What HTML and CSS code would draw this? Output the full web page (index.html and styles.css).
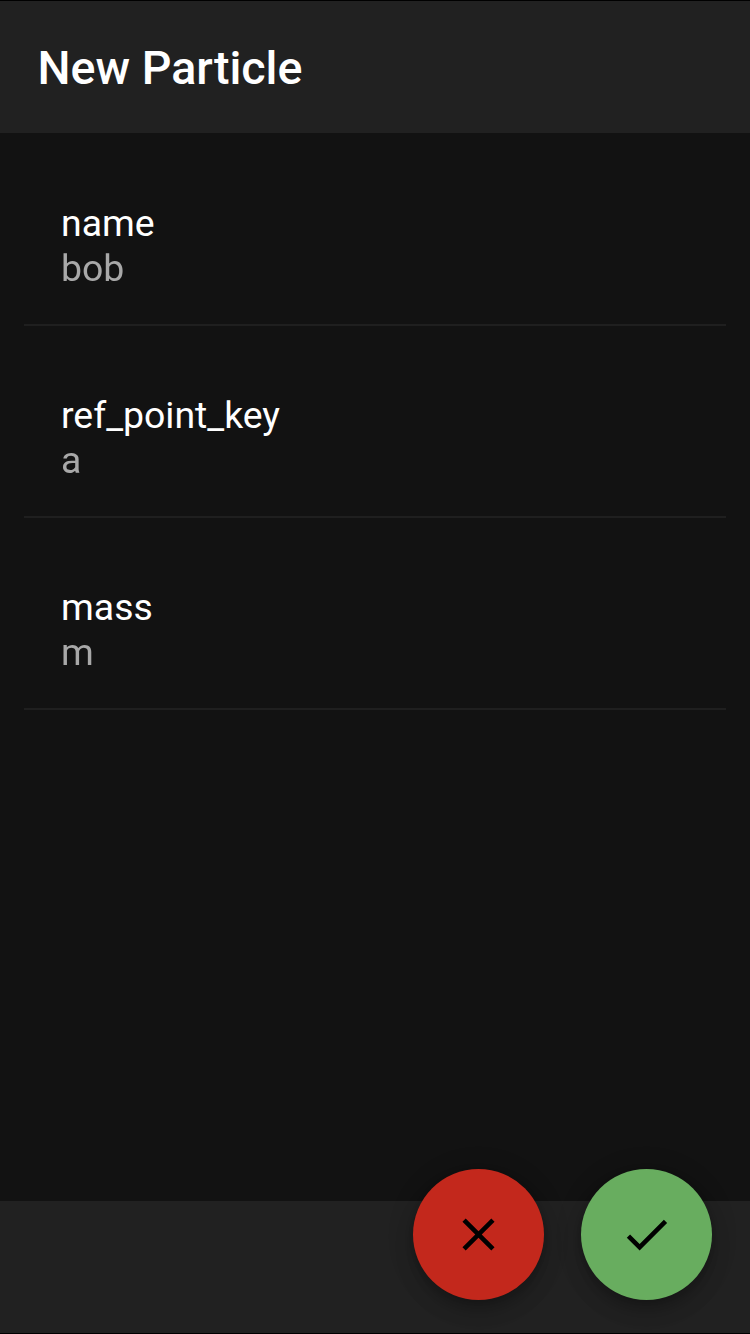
FILE: index.html
```html
<!DOCTYPE html>
<html>
<head>
<meta charset="utf-8">
<title>New Particle</title>
<link rel="stylesheet" href="styles.css">
</head>
<body>
<div class="appbar">New Particle</div>

<div class="fields">
  <div class="field">
    <div class="field-label">name</div>
    <div class="field-value">bob</div>
  </div>
  <div class="field">
    <div class="field-label">ref_point_key</div>
    <div class="field-value">a</div>
  </div>
  <div class="field">
    <div class="field-label">mass</div>
    <div class="field-value">m</div>
  </div>
</div>

<div class="bottombar">
  <div class="fabs">
    <div class="fab fab-cancel">
      <svg width="55" height="55" viewBox="0 0 24 24"><path d="M19 6.41 17.59 5 12 10.59 6.41 5 5 6.41 10.59 12 5 17.59 6.41 19 12 13.41 17.59 19 19 17.59 13.41 12z"/></svg>
    </div>
    <div class="fab fab-ok">
      <svg width="55" height="55" viewBox="0 0 24 24"><path d="M9 16.17 4.83 12l-1.42 1.41L9 19 21 7l-1.41-1.41z"/></svg>
    </div>
  </div>
</div>
</body>
</html>
```

FILE: styles.css
```css
/* New Particle form */

html, body
{ height: 100%;
}

body
{ margin: 0;
display: flex;
flex-direction: column;
box-sizing: border-box;
border-top: 1px solid #000;
border-bottom: 1px solid #000;
background-color: #121212;
color: #fff;
font-family: Roboto, "Liberation Sans", sans-serif;
}

.appbar
{ flex: none;
height: 132px;
display: flex;
align-items: center;
padding: 2px 0 0 37.5px;
box-sizing: border-box;
background-color: #212121;
font-size: 46.6px;
font-weight: 500;
}

.fields
{ flex: 1;
padding: 1px 24px 0;
}

.field
{ height: 190px;
padding-left: 37px;
border-bottom: 2px solid #1f1f1f;
display: flex;
flex-direction: column;
justify-content: flex-end;
font-size: 37.4px;
line-height: 45px;
}

.field-label
{ color: #fff;
}

.field-value
{ color: #a8a8a8;
margin-bottom: 33px;
will-change: transform;
}

.bottombar
{ flex: none;
height: 132px;
position: relative;
background-color: #212121;
}

.fabs
{ position: absolute;
right: 38px;
bottom: 33px;
display: flex;
gap: 37px;
}

.fab
{ width: 131px;
height: 131px;
border-radius: 50%;
display: flex;
align-items: center;
justify-content: center;
box-shadow: 0 12px 20px rgba(0,0,0,.14), 0 2px 30px rgba(0,0,0,.1), 0 6px 10px rgba(0,0,0,.12);
}

.fab-cancel
{ background-color: #c3281c;
}

.fab-ok
{ background-color: #68ad5f;
}
```
